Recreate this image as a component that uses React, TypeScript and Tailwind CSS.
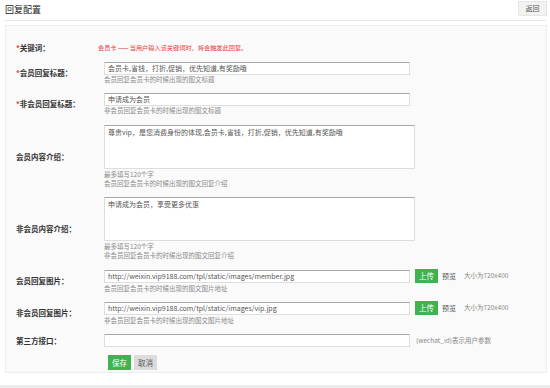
import React from "react";

const font = { fontFamily: '"Noto Sans CJK SC", "Noto Sans", sans-serif' };

function Label({ text, star }: { text: string; star?: boolean }) {
  return (
    <div className="w-[88px] shrink-0 pl-[10px] text-[7.5px] font-bold text-[#333] leading-[10px] flex items-center">
      {star && <span className="text-[#e4393c]">*</span>}
      <span>{text}</span>
    </div>
  );
}

function Help({ children }: { children: React.ReactNode }) {
  return <div className="text-[6.5px] leading-[9px] text-[#8a8a8a]">{children}</div>;
}

function Input({ value, w = "w-[306px]" }: { value: string; w?: string }) {
  return (
    <div
      className={`${w} h-[13px] bg-white border border-[#dedede] border-t-[#a9a9a9] flex items-center px-[3px] text-[7px] text-[#555] whitespace-nowrap overflow-hidden`}
    >
      {value}
    </div>
  );
}

function TextArea({ value }: { value: string }) {
  return (
    <div className="w-[311px] h-[44px] bg-white border border-[#dedede] border-t-[#a9a9a9] px-[3px] pt-[2px] text-[7px] leading-[9px] text-[#555]">
      {value}
    </div>
  );
}

function Upload() {
  return (
    <div className="flex items-center ml-[5px]">
      <div className="w-[23px] h-[14px] bg-[#3fb34f] text-white text-[7.5px] flex items-center justify-center">上传</div>
      <span className="ml-[4px] text-[7px] text-[#555]">预览</span>
      <span className="ml-[8px] text-[6.5px] text-[#888]">大小为720x400</span>
    </div>
  );
}

export default function App() {
  return (
    <div className="w-[550px] h-[388px] bg-white relative overflow-hidden" style={font}>
      {/* header */}
      <div className="mx-[4px] h-[21px] border-b border-[#e8e8e8] flex items-start justify-between">
        <div className="text-[9px] text-[#222] leading-[20px] pl-[1px]">回复配置</div>
        <div className="mt-[1px] mr-[-1px] w-[29px] h-[15px] bg-[#f2f2f2] border border-[#e6e6e6] text-[7px] text-[#555] flex items-center justify-center">
          返回
        </div>
      </div>

      {/* panel */}
      <div className="ml-[5px] mt-[4px] w-[542px] h-[348px] bg-[#fafafa] border border-[#eeeeee] pt-[16px]">
        {/* keyword */}
        <div className="flex h-[12px]">
          <Label text="关键词：" star />
          <div className="ml-[4px] flex items-center text-[6.2px] text-[#e4393c] whitespace-nowrap">
            会员卡 —— 当用户输入该关键词时，将会触发此回复。
          </div>
        </div>

        {/* member title */}
        <div className="flex mt-[8px]">
          <Label text="会员回复标题：" star />
          <div className="pl-[10px] flex flex-col">
            <Input value="会员卡,省钱，打折,促销，优先知道,有奖励哦" />
            <Help>会员回复会员卡的时候出现的图文标题</Help>
          </div>
        </div>

        {/* non member title */}
        <div className="flex mt-[9px]">
          <Label text="非会员回复标题：" star />
          <div className="pl-[10px] flex flex-col">
            <Input value="申请成为会员" />
            <Help>非会员回复会员卡的时候出现的图文标题</Help>
          </div>
        </div>

        {/* member content */}
        <div className="flex mt-[10px]">
          <Label text="会员内容介绍：" />
          <div className="pl-[10px] flex flex-col">
            <TextArea value="尊贵vip，是您消费身份的体现,会员卡,省钱，打折,促销，优先知道,有奖励哦" />
            <div className="h-[1px]" />
            <Help>最多填写120个字</Help>
            <Help>会员回复会员卡的时候出现的图文回复介绍</Help>
          </div>
        </div>

        {/* non member content */}
        <div className="flex mt-[9px]">
          <Label text="非会员内容介绍：" />
          <div className="pl-[10px] flex flex-col">
            <TextArea value="申请成为会员，享受更多优惠" />
            <div className="h-[1px]" />
            <Help>最多填写120个字</Help>
            <Help>非会员回复会员卡的时候出现的图文回复介绍</Help>
          </div>
        </div>

        {/* member image */}
        <div className="flex mt-[9px]">
          <Label text="会员回复图片：" />
          <div className="pl-[10px] flex flex-col">
            <div className="flex items-center">
              <Input value="http://weixin.vip9188.com/tpl/static/images/member.jpg" />
              <Upload />
            </div>
            <div className="h-[1px]" />
            <Help>会员回复会员卡的时候出现的图文图片地址</Help>
          </div>
        </div>

        {/* non member image */}
        <div className="flex mt-[8px]">
          <Label text="非会员回复图片：" />
          <div className="pl-[10px] flex flex-col">
            <div className="flex items-center">
              <Input value="http://weixin.vip9188.com/tpl/static/images/vip.jpg" />
              <Upload />
            </div>
            <div className="h-[1px]" />
            <Help>非会员回复会员卡的时候出现的图文图片地址</Help>
          </div>
        </div>

        {/* third party */}
        <div className="flex mt-[9px]">
          <Label text="第三方接口：" />
          <div className="pl-[10px] flex items-center">
            <Input value="" />
            <span className="ml-[6px] text-[6.5px] text-[#888]">{"{wechat_id}表示用户参数"}</span>
          </div>
        </div>

        {/* buttons */}
        <div className="flex mt-[8px] pl-[102px] gap-[3px]">
          <div className="w-[23px] h-[15px] bg-[#3fb34f] text-white text-[7.5px] flex items-center justify-center">保存</div>
          <div className="w-[23px] h-[15px] bg-[#dcdcdc] text-[#555] text-[7.5px] flex items-center justify-center">取消</div>
        </div>
      </div>

      <div className="absolute left-0 right-0 bottom-0 h-[3px] bg-[#ececec]" />
    </div>
  );
}
